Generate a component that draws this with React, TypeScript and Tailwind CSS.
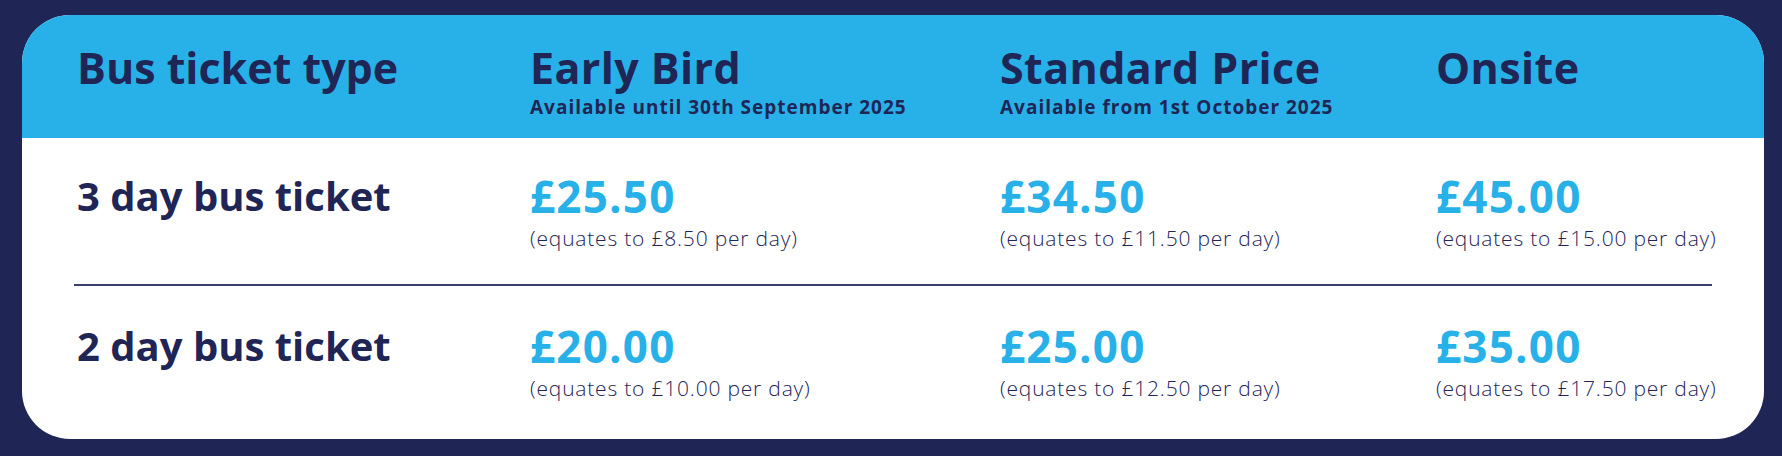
const rows = [
  {
    label: '3 day bus ticket',
    prices: [
      { price: '£25.50', perDay: '£8.50' },
      { price: '£34.50', perDay: '£11.50' },
      { price: '£45.00', perDay: '£15.00' },
    ],
  },
  {
    label: '2 day bus ticket',
    prices: [
      { price: '£20.00', perDay: '£10.00' },
      { price: '£25.00', perDay: '£12.50' },
      { price: '£35.00', perDay: '£17.50' },
    ],
  },
];

const columns = [
  { title: 'Early Bird', note: 'Available until 30th September 2025' },
  { title: 'Standard Price', note: 'Available from 1st October 2025' },
  { title: 'Onsite', note: '' },
];

const grid = 'grid grid-cols-[453px_470px_436px_1fr] pl-[55px] pr-[40px]';

export default function App() {
  return (
    <div
      className="w-full h-screen bg-[#1f2555] pl-[22px] pr-[18px] pt-[15px] pb-[17px]"
      style={{ fontFamily: '"Open Sans", Lato, sans-serif' }}
    >
      <div className="h-[424px] bg-white rounded-[48px] overflow-hidden text-[#1f2555]">
        <div className={`${grid} h-[124px] bg-[#28b1e8] pt-[31px] border-b border-white`}>
          <h2 className="text-[43px] leading-none font-bold">Bus ticket type</h2>
          {columns.map((col) => (
            <div key={col.title}>
              <h2 className="text-[43px] leading-none font-bold tracking-[0.4px]">{col.title}</h2>
              {col.note && (
                <p className="mt-[7px] text-[19px] leading-[1.2] font-bold tracking-[1px] whitespace-nowrap">
                  {col.note}
                </p>
              )}
            </div>
          ))}
        </div>

        {rows.map((row, i) => (
          <div key={row.label}>
            {i > 0 && <div className="ml-[52px] mr-[52px] h-[2px] bg-[#3a3f6c]" />}
            <div className={`${grid} ${i === 0 ? 'pt-[35px] h-[145px]' : 'pt-[38px]'}`}>
              <p className="pt-[2px] text-[40px] leading-none font-bold">{row.label}</p>
              {row.prices.map((p) => (
                <div key={p.price}>
                  <p className="text-[44px] leading-none font-bold tracking-[1.2px] text-[#28b1e8]">
                    {p.price}
                  </p>
                  <p className="mt-[8px] text-[21px] leading-[1.2] font-light tracking-[0.8px] whitespace-nowrap">
                    (equates to {p.perDay} per day)
                  </p>
                </div>
              ))}
            </div>
          </div>
        ))}
      </div>
    </div>
  );
}
